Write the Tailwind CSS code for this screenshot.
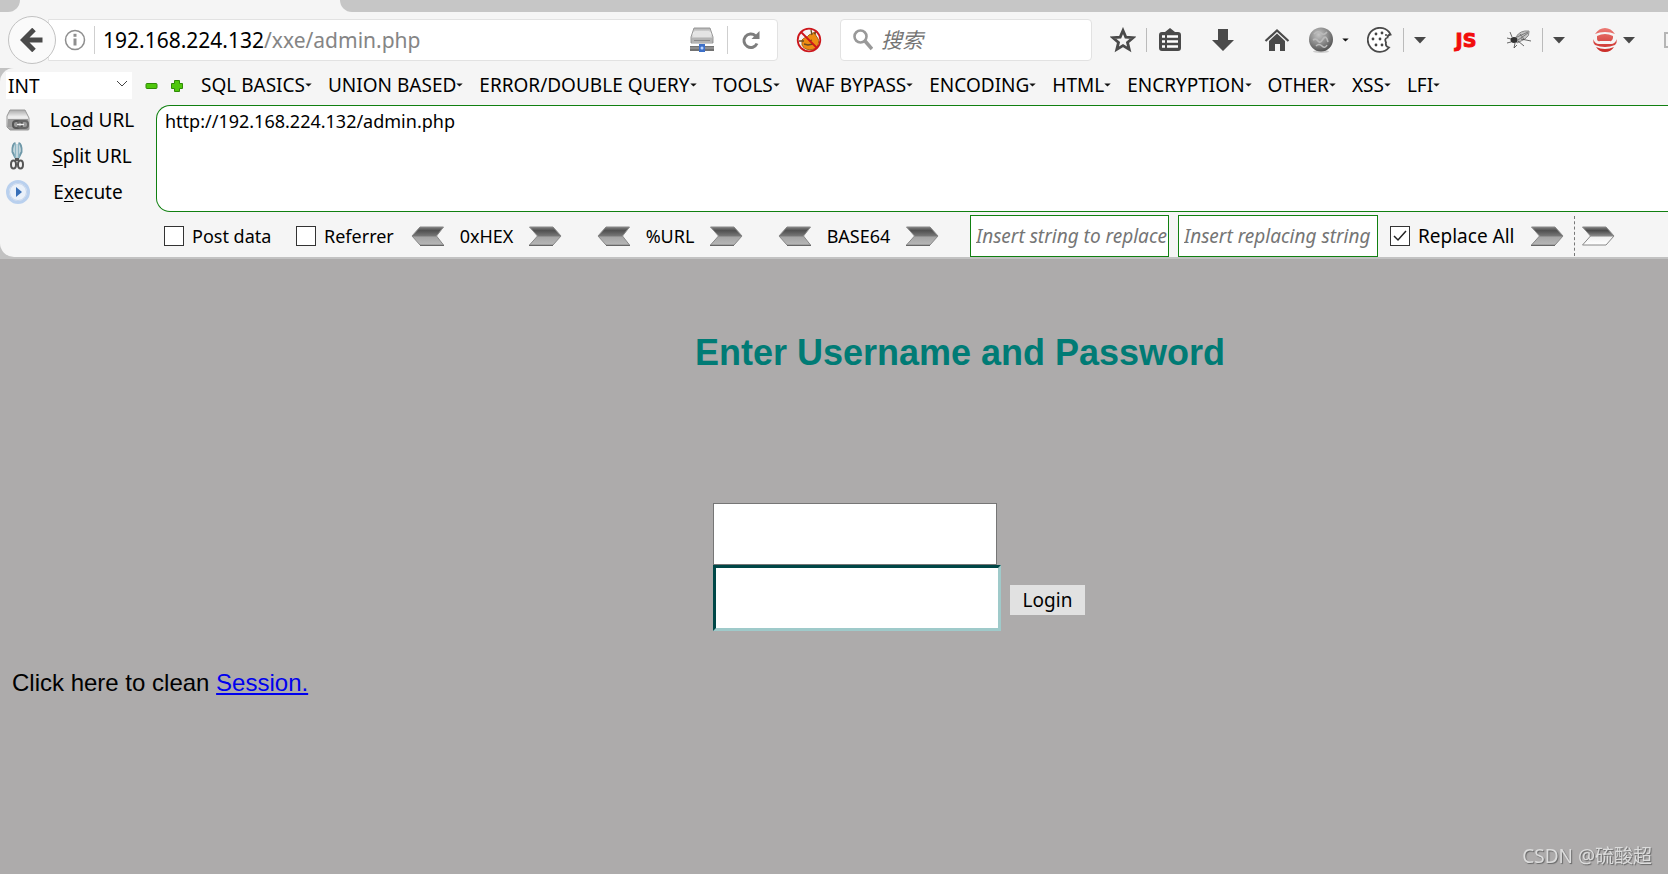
<!DOCTYPE html>
<html lang="zh-CN">
<head>
<meta charset="utf-8">
<title>192.168.224.132/xxe/admin.php</title>
<script src="https://cdn.jsdelivr.net/npm/@tailwindcss/browser@4"></script>
</head>
<body class="min-h-screen flex flex-col bg-[#adabab] text-black text-[18px] leading-6 font-['Noto_Sans','Noto_Sans_CJK_SC',sans-serif] overflow-x-hidden">
<svg class="absolute size-0" aria-hidden="true">
  <defs>
    <linearGradient id="steel" x1="0" y1="0" x2="0" y2="1"><stop offset="0" stop-color="#808080"/><stop offset=".2" stop-color="#505050"/><stop offset=".5" stop-color="#777"/><stop offset=".55" stop-color="#a4a4a4"/><stop offset="1" stop-color="#b8b8b8"/></linearGradient>
    <linearGradient id="steelwhite" x1="0" y1="0" x2="0" y2="1"><stop offset="0" stop-color="#808080"/><stop offset=".2" stop-color="#4a4a4a"/><stop offset=".5" stop-color="#8a8a8a"/><stop offset=".56" stop-color="#f0f0f0"/><stop offset="1" stop-color="#fff"/></linearGradient>
    <linearGradient id="metal" x1="0" y1="0" x2="0" y2="1"><stop offset="0" stop-color="#aaa"/><stop offset=".35" stop-color="#f0f0f0"/><stop offset="1" stop-color="#999"/></linearGradient>
    <radialGradient id="ball" cx=".4" cy=".3" r=".7"><stop offset="0" stop-color="#c4c4c4"/><stop offset=".6" stop-color="#858585"/><stop offset="1" stop-color="#555"/></radialGradient>
    <linearGradient id="redfade" x1="0" y1="0" x2="0" y2="1"><stop offset="0" stop-color="#ec7b75"/><stop offset="1" stop-color="#c92a25"/></linearGradient>
    <symbol id="right" viewBox="0 0 34 20"><path d="M1.500 1H25l8 9-8 9H1.500l8-9z" fill="url(#steel)" stroke="#888"/><path d="M1 19.500h24" stroke="#666"/></symbol>
    <symbol id="left" viewBox="0 0 34 20"><path d="M32.500 1H9L1 10l8 9h23.500l-7-9z" fill="url(#steel)" stroke="#888"/><path d="M9 19.500h24" stroke="#666"/></symbol>
    <symbol id="caret" viewBox="0 0 8 5"><path d="M0 .5h8L4 4.500z" fill="#111"/></symbol>
    <symbol id="drop" viewBox="0 0 12 7"><path d="M0 0h12L6 6.500z" fill="#484848"/></symbol>
  </defs>
</svg>

<header>
  <!-- tab strip -->
  <div class="h-3 flex bg-[#f5f5f5]">
    <div class="w-5 bg-[#c6c6c6] rounded-br-[20px]"></div>
    <div class="w-80"></div>
    <div class="flex-1 bg-[#c6c6c6] rounded-bl-[20px]"></div>
  </div>

  <!-- navigation bar -->
  <nav class="h-14 pl-2 flex items-center bg-[#f5f5f5]" aria-label="Navigation">
    <button aria-label="Back" class="relative z-10 size-12 shrink-0 rounded-full border border-[#c2c2c2] bg-[#fafafa] grid place-items-center">
      <svg width="24" height="24" viewBox="0 0 24 24" fill="none" stroke="#4a4a4a" stroke-width="5"><path d="M22.500 12H5M14 1.500 3.500 12 14 22.500"/></svg>
    </button>
    <div class="flex-1 min-w-0 h-[42px] -ml-2 pl-[15px] flex items-center bg-white border border-[#e2e2e2] rounded-r-sm">
      <svg class="shrink-0" width="22" height="22" viewBox="0 0 22 22" fill="none" stroke="#8e8e8e"><circle cx="11" cy="11" r="9.500" stroke-width="1.500"/><path d="M11 9.500v7" stroke-width="3"/><path d="M11 4.800v3" stroke-width="3"/></svg>
      <span class="ml-2 w-px h-7 bg-[#cfcfcf]"></span>
      <div class="ml-2 flex-1 text-[21px] leading-7 text-[#858585]" role="textbox" aria-label="Address" tabindex="0"><span class="text-black">192.168.224.132</span>/xxe/admin.php</div>
      <button aria-label="Network" class="shrink-0"><svg width="26" height="26" viewBox="0 0 26 26"><path d="M5 1h16l3 9v6H2v-6z" fill="url(#metal)" stroke="#999"/><path d="M6 4h14l2 6H4z" fill="#e4e4e4"/><path d="M3 11h20v5H3z" fill="#b4b4b4"/><path d="M5 13.500h16" stroke="#8a8a8a"/><path d="M1 19h24v5H1z" fill="#727272"/><path d="M1 21h24" stroke="#aaa"/><path d="M10 17h6v8h-6z" fill="#3e70c8"/><circle cx="13" cy="21" r="1.500" fill="#b9d3ff"/></svg></button>
      <span class="ml-3 w-px h-7 bg-[#cfcfcf]"></span>
      <button aria-label="Reload" class="ml-3 mr-[15px] shrink-0"><svg width="22" height="22" viewBox="0 0 22 22" fill="none"><path d="M17 14.500A6.800 6.800 0 1 1 15.500 6.800" stroke="#7d7d7d" stroke-width="3"/><path d="M19.500 2v8h-8z" fill="#7d7d7d"/></svg></button>
    </div>
    <button aria-label="Firebug blocked" class="mx-[18px] shrink-0"><svg width="26" height="26" viewBox="0 0 26 26"><path d="M6 13c2-3 5-2 7-5l6-3 1 4c4 4 3 8 0 12-5 3-12 2-14-3z" fill="#ee8b12" stroke="#a86312"/><path d="M3 14h5M18 7l3-3M15 3l1 5M8 17l4 1 5-1M13 14l3-1" stroke="#6b4a22" stroke-width="1.300" fill="none"/><circle cx="13" cy="13" r="11.300" fill="none" stroke="#cc161b" stroke-width="1.800"/><path d="m5 5 16 16" stroke="#cc161b" stroke-width="1.800"/></svg></button>
    <label class="w-[252px] h-[42px] shrink-0 pl-3 flex items-center gap-2 bg-white border border-[#e2e2e2] rounded-sm">
      <svg class="shrink-0" width="20" height="22" viewBox="0 0 20 22" fill="none" stroke="#999"><circle cx="7.500" cy="7.500" r="6" stroke-width="2.600"/><path d="m12 12 7 8" stroke-width="3.600"/></svg>
      <input aria-label="搜索" placeholder="搜索" class="w-full min-w-0 text-[21px] italic outline-none placeholder:text-[#757575]">
    </label>
    <div class="shrink-0 flex items-center">
      <button aria-label="Bookmark" class="ml-[18px]"><svg width="26" height="26" viewBox="0 0 26 26"><path d="m13 3.500 2.800 6.600 7.200.6-5.500 4.700 1.700 7L13 18.600l-6.200 3.800 1.700-7L3 10.700l7.200-.6z" fill="none" stroke="#4a4a4a" stroke-width="2.800"/></svg></button>
      <span class="ml-[10px] w-px h-6 bg-[#bbb]"></span>
      <button aria-label="Bookmarks list" class="ml-[11px]"><svg width="24" height="26" viewBox="0 0 24 26"><path d="M4 5h3l5-4 5 4h3q3 0 3 3v13q0 3-3 3H4q-3 0-3-3V8q0-3 3-3z" fill="#4a4a4a"/><path d="M4 9.500h3M4 14.500h3M4 19.500h3M9 9.500h11M9 14.500h11M9 19.500h11" stroke="#fff" stroke-width="2.500"/></svg></button>
      <button aria-label="Downloads" class="ml-[29px]"><svg width="24" height="24" viewBox="0 0 24 24"><path d="M7 1h10v11h6L12 23 1 12h6z" fill="#4a4a4a"/></svg></button>
      <button aria-label="Home" class="ml-[29px]"><svg width="26" height="24" viewBox="0 0 26 24"><path d="M1.500 13 13 2.500 24.500 13" fill="none" stroke="#4a4a4a" stroke-width="2.200"/><path d="M13 5.500 21 13v10h-5v-7h-5v7H5V13z" fill="#4a4a4a"/></svg></button>
      <button aria-label="Proxy" class="ml-[18px] flex items-center gap-2"><svg width="26" height="26" viewBox="0 0 26 26"><ellipse cx="13" cy="24.500" rx="8" ry="1.500" fill="#ccc"/><circle cx="13" cy="12.500" r="12" fill="url(#ball)"/><path d="M6 7q4-4 7-1t6-1M5 13q3-2 5 1t5-2 5 3M8 19q3-3 6 0t5-1" fill="none" stroke="#bababa" stroke-width="1.600"/></svg><svg width="7" height="4"><use href="#caret"/></svg></button>
      <button aria-label="Cookies" class="ml-[18px]"><svg width="26" height="26" viewBox="0 0 26 26"><path d="M23.500 7.500A12 12 0 1 0 22 20.500q-4-1-3-5-2-4 1.500-5 0-2.500 3-3z" fill="#fff" stroke="#4a4a4a" stroke-width="1.800"/><g fill="#444"><circle cx="9" cy="7" r="1.400"/><circle cx="15" cy="6" r="1.400"/><circle cx="6" cy="12" r="1.400"/><circle cx="13" cy="12" r="1.400"/><circle cx="9" cy="18" r="1.400"/><circle cx="15" cy="18" r="1.400"/><circle cx="19" cy="8" r="1"/></g></svg></button>
      <span class="ml-[10px] w-px h-6 bg-[#bbb]"></span>
      <button aria-label="Cookie menu" class="ml-[10px]"><svg width="12" height="7"><use href="#drop"/></svg></button>
      <button aria-label="JavaScript" class="ml-[26px] w-7 text-center text-[19px] font-bold text-[#f20d0d] font-['DejaVu_Sans',sans-serif] [-webkit-text-stroke:1px_#f20d0d]">JS</button>
      <button aria-label="Fly" class="ml-[26px]"><svg width="26" height="24" viewBox="0 0 26 24"><path d="M10 9q4-7 13-6 1 5-4 8l-8 4z" fill="#c4c4c4" stroke="#888"/><path d="M11 9l11-5M12 12l10-7M14 6l4 5" stroke="#666" stroke-width=".8"/><ellipse cx="8" cy="12" rx="3.500" ry="3" fill="#333"/><path d="M6 9 4 4M5 11 1 10M5 14l-4 1M9 15l-1 5 3-3M12 13l6 5M15 11l10 2" stroke="#444" stroke-width=".8" fill="none"/></svg></button>
      <span class="ml-[10px] w-px h-6 bg-[#bbb]"></span>
      <button aria-label="Fly menu" class="ml-[10px]"><svg width="12" height="7"><use href="#drop"/></svg></button>
      <button aria-label="Request blocker" class="ml-[27px] flex items-center gap-[5px]"><svg width="26" height="26" viewBox="0 0 26 26" fill="url(#redfade)"><path d="M3 7Q7 1 13 1t10 6q-4-2-10-2T3 7zM5 9q8-4 16 0v2q-1 4-3 3H8q-3 1-3-3zM1 12q2 5 6 5h12q4 0 6-5 0 4-2 6-10 4-20 0-2-2-2-6zM4 20q9 4 18 0-3 5-9 5t-9-5z"/></svg><svg width="12" height="7"><use href="#drop"/></svg></button>
      <span class="ml-[29px] w-1 h-4 border-2 border-r-0 border-[#b5b5b5]"></span>
    </div>
  </nav>

  <!-- HackBar -->
  <section class="bg-[#c2c2c2] pb-[2px]" aria-label="HackBar">
    <div class="bg-[#f5f5f5] rounded-l-[14px] h-[189px] text-[19px]">
      <div class="h-[35px] pl-[6px] flex items-center">
        <div class="relative w-[126px] shrink-0">
          <select aria-label="Database type" class="block w-full h-[27px] pl-[2px] bg-white appearance-none"><option>INT</option></select>
          <svg class="absolute right-1 top-2 pointer-events-none" width="12" height="8" fill="none" stroke="#444"><path d="m1 1 5 5 5-5"/></svg>
        </div>
        <button aria-label="Remove" class="ml-[13px]"><svg width="13" height="14"><rect x="1" y="4.500" width="11" height="5" rx="1" fill="#4fc70c" stroke="#2f8a07"/></svg></button>
        <button aria-label="Add" class="ml-3 mr-[17px]"><svg width="14" height="14"><path d="M4.500 1.500h5v3h3v5h-3v3h-5v-3h-3v-5h3z" fill="#4fc70c" stroke="#2f8a07"/></svg></button>
        <div class="flex items-center gap-4 whitespace-nowrap pb-[2px]">
          <button class="flex items-center">SQL BASICS<svg width="7" height="4"><use href="#caret"/></svg></button>
          <button class="flex items-center">UNION BASED<svg width="7" height="4"><use href="#caret"/></svg></button>
          <button class="flex items-center">ERROR/DOUBLE QUERY<svg width="7" height="4"><use href="#caret"/></svg></button>
          <button class="flex items-center">TOOLS<svg width="7" height="4"><use href="#caret"/></svg></button>
          <button class="flex items-center">WAF BYPASS<svg width="7" height="4"><use href="#caret"/></svg></button>
          <button class="flex items-center">ENCODING<svg width="7" height="4"><use href="#caret"/></svg></button>
          <button class="flex items-center">HTML<svg width="7" height="4"><use href="#caret"/></svg></button>
          <button class="flex items-center">ENCRYPTION<svg width="7" height="4"><use href="#caret"/></svg></button>
          <button class="flex items-center">OTHER<svg width="7" height="4"><use href="#caret"/></svg></button>
          <button class="flex items-center">XSS<svg width="7" height="4"><use href="#caret"/></svg></button>
          <button class="flex items-center">LFI<svg width="7" height="4"><use href="#caret"/></svg></button>
        </div>
      </div>
      <div class="flex pt-[2px]">
        <div class="w-[156px] shrink-0 pl-[6px]">
          <button class="h-[30px] w-[132px] flex items-center"><svg class="shrink-0" width="24" height="24" viewBox="0 0 24 24"><path d="M4 2h15l4 8v11q0 1-1 1H4l-3-3V8z" fill="url(#metal)" stroke="#999"/><path d="M2 11h20v8H2z" fill="#999"/><rect x="7" y="13" width="9" height="7" rx="3" fill="none" stroke="#555" stroke-width="2"/><rect x="12" y="13" width="10" height="7" rx="3" fill="none" stroke="#666" stroke-width="2"/><path d="M11 16.500h7" stroke="#eee" stroke-width="1.500"/></svg><span class="flex-1 pl-4">Lo<u class="underline-offset-2">a</u>d URL</span></button>
          <button class="h-[42px] w-[132px] flex items-center"><svg class="shrink-0" width="24" height="28" viewBox="0 0 24 28" fill="none"><path d="M9.500 1Q6 2 6.500 10l3 6M12.500 1Q16 2 15.500 10l-3 6" stroke="#6e98a8" stroke-width="2"/><path d="M9.500 2v14M12.500 2v14" stroke="#8fb6c4" stroke-width="2"/><path d="M9 16h4v3H9z" fill="#555"/><ellipse cx="7.500" cy="22.500" rx="2.500" ry="4" stroke="#555" stroke-width="2"/><ellipse cx="14.500" cy="22.500" rx="2.500" ry="4" stroke="#555" stroke-width="2"/></svg><span class="flex-1 pl-4"><u class="underline-offset-2">S</u>plit URL</span></button>
          <button class="h-[30px] w-[132px] flex items-center"><svg class="shrink-0" width="24" height="24" viewBox="0 0 24 24"><circle cx="12" cy="12" r="10.500" fill="#f7fafe" stroke="#b9d0ee" stroke-width="3"/><circle cx="12" cy="12" r="8.500" fill="#eaf1fa" stroke="#c3d3ea"/><path d="m10 7 6 5-6 5z" fill="#376fb8"/></svg><span class="flex-1 pl-2">E<u class="underline-offset-2">x</u>ecute</span></button>
        </div>
        <textarea aria-label="URL" class="block flex-1 h-[107px] px-2 py-[3px] text-[18px] bg-white border border-r-0 border-[#118011] rounded-l-[14px] resize-none outline-none">http://192.168.224.132/admin.php</textarea>
      </div>
      <div class="pl-[164px] pt-[3px] flex items-center whitespace-nowrap text-[18px]">
        <label class="flex items-center gap-2 w-[132px]"><input type="checkbox" class="appearance-none size-5 bg-white border border-[#333]">Post data</label>
        <label class="flex items-center gap-2 w-[115px]"><input type="checkbox" class="appearance-none size-5 bg-white border border-[#333]">Referrer</label>
        <div class="w-[186px] flex items-center">
          <button aria-label="Decode hex"><svg width="34" height="20"><use href="#left"/></svg></button><span class="w-[83px] text-center">0xHEX</span><button aria-label="Encode hex"><svg width="34" height="20"><use href="#right"/></svg></button>
        </div>
        <div class="w-[181px] flex items-center">
          <button aria-label="Decode URL"><svg width="34" height="20"><use href="#left"/></svg></button><span class="w-[78px] text-center">%URL</span><button aria-label="Encode URL"><svg width="34" height="20"><use href="#right"/></svg></button>
        </div>
        <div class="w-[192px] flex items-center">
          <button aria-label="Decode base64"><svg width="34" height="20"><use href="#left"/></svg></button><span class="w-[93px] text-center">BASE64</span><button aria-label="Encode base64"><svg width="34" height="20"><use href="#right"/></svg></button>
        </div>
        <input aria-label="Search string" placeholder="Insert string to replace" class="w-[199px] h-[42px] pl-[5px] text-[19px] bg-white border border-[#118011] italic outline-none placeholder:text-[#757575]">
        <input aria-label="Replacement string" placeholder="Insert replacing string" class="ml-[9px] w-[200px] h-[42px] pl-[5px] text-[19px] bg-white border border-[#118011] italic outline-none placeholder:text-[#757575]">
        <label class="ml-3 w-[140px] flex items-center gap-2 text-[19px]"><span class="relative size-5"><input type="checkbox" checked class="block appearance-none size-5 bg-white border border-[#333]"><svg class="absolute inset-0 pointer-events-none" width="20" height="20" fill="none" stroke="#222" stroke-width="1.500"><path d="m4 10 4 4 8-9"/></svg></span>Replace All</label>
        <button aria-label="Replace"><svg width="34" height="20"><use href="#right"/></svg></button>
        <span class="ml-[10px] h-10 border-l border-dashed border-[#777]"></span>
        <button aria-label="Next" class="ml-[6px]"><svg width="34" height="20" viewBox="0 0 34 20"><path d="M1.500 1H25l8 9-8 9H1.500l8-9z" fill="url(#steelwhite)" stroke="#888"/></svg></button>
      </div>
    </div>
  </section>
</header>

<main class="flex-1 font-['Liberation_Sans',Arial,sans-serif]">
  <h1 class="pt-[73px] pl-[252px] text-center text-[36px] leading-[42px] font-bold text-[#007b75]">Enter Username and Password</h1>
  <form class="mt-[129px] pl-[130px] flex justify-center">
    <div>
      <input aria-label="Username" class="block w-[284px] h-[62px] px-2 bg-white border border-[#767676] outline-none">
      <div class="flex items-center gap-[9px]">
        <input type="password" aria-label="Password" class="block w-[288px] h-[66px] px-2 bg-white border-3 border-t-[#004747] border-l-[#004747] border-r-[#9fcaca] border-b-[#9fcaca] outline-none">
        <button type="button" class="w-[75px] h-[30px] mt-1 bg-[#e1e1e1] text-[19px] font-['Noto_Sans',sans-serif]">Login</button>
      </div>
    </div>
  </form>
  <p class="mt-[38px] pl-3 text-[24px] leading-7">Click here to clean <a href="#" class="text-[#0000ee] underline">Session.</a></p>
</main>
<div class="fixed right-4 bottom-1 text-[19px] leading-7 text-[#dcdcdc] [text-shadow:1px_1px_1px_#666]">CSDN @硫酸超</div>
</body>
</html>
